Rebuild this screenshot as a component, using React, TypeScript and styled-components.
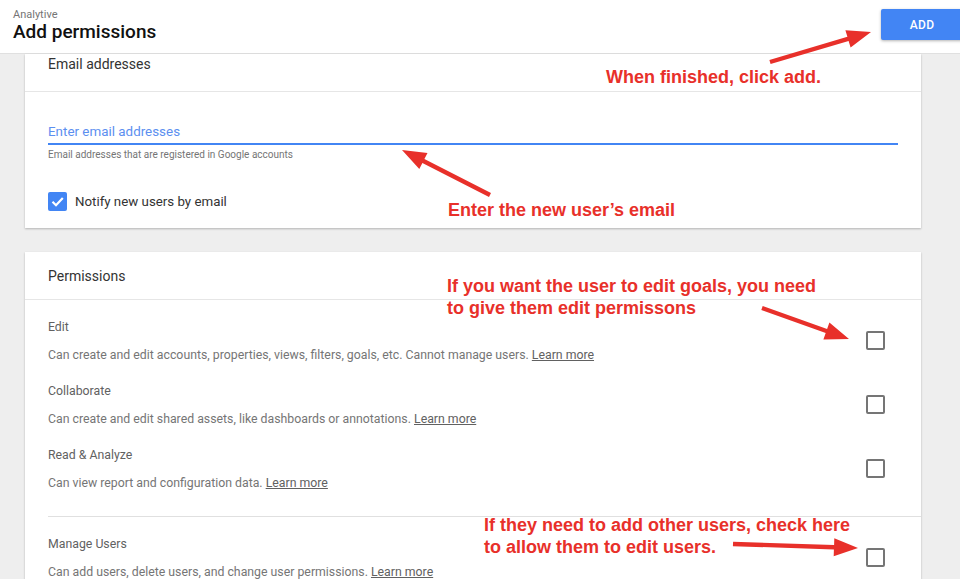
import styled, { createGlobalStyle } from 'styled-components'

const GlobalStyle = createGlobalStyle`
  html, body {
    margin: 0;
    padding: 0;
    background: #eeeeee;
    font-family: Roboto, "Liberation Sans", Arial, sans-serif;
    overflow: hidden;
  }
`

type Permission = {
  title: string
  text: string
}

const basicPermissions: Permission[] = [
  {
    title: 'Edit',
    text: 'Can create and edit accounts, properties, views, filters, goals, etc. Cannot manage users.',
  },
  {
    title: 'Collaborate',
    text: 'Can create and edit shared assets, like dashboards or annotations.',
  },
  {
    title: 'Read & Analyze',
    text: 'Can view report and configuration data.',
  },
]

const managePermission: Permission = {
  title: 'Manage Users',
  text: 'Can add users, delete users, and change user permissions.',
}

type Note = {
  x: number
  y: number
  lines: string[]
}

const notes: Note[] = [
  { x: 606, y: 66, lines: ['When finished, click add.'] },
  { x: 448, y: 199, lines: ['Enter the new user’s email'] },
  { x: 447, y: 275, lines: ['If you want the user to edit goals, you need', 'to give them edit permissons'] },
  { x: 484, y: 514, lines: ['If they need to add other users, check here', 'to allow them to edit users.'] },
]

const arrows = [
  { from: [770, 62], to: [871, 32] },
  { from: [490, 195], to: [402, 150] },
  { from: [762, 308], to: [849, 339] },
  { from: [733, 544], to: [858, 548] },
]

function arrowShape(from: number[], to: number[]) {
  const [x1, y1] = from
  const [x2, y2] = to
  const len = Math.hypot(x2 - x1, y2 - y1)
  const ux = (x2 - x1) / len
  const uy = (y2 - y1) / len
  const nx = -uy
  const ny = ux
  const head = 24
  const half = 9
  const shaft = 2.2
  const bx = x2 - ux * head
  const by = y2 - uy * head
  const pts = [
    [x1 + nx * shaft, y1 + ny * shaft],
    [bx + nx * shaft, by + ny * shaft],
    [bx + nx * half, by + ny * half],
    [x2, y2],
    [bx - nx * half, by - ny * half],
    [bx - nx * shaft, by - ny * shaft],
    [x1 - nx * shaft, y1 - ny * shaft],
  ]
  return pts.map((p) => p.map((v) => v.toFixed(1)).join(',')).join(' ')
}

function CheckMark() {
  return (
    <svg width="19" height="19" viewBox="0 0 19 19">
      <path d="M4.5 9.8 L8 13.2 L14.8 6" fill="none" stroke="#fff" strokeWidth="2.2" />
    </svg>
  )
}

function PermissionRow({ item }: { item: Permission }) {
  return (
    <Row>
      <RowText>
        <RowTitle>{item.title}</RowTitle>
        <RowDesc>
          {item.text} <LearnMore href="#">Learn more</LearnMore>
        </RowDesc>
      </RowText>
      <EmptyBox />
    </Row>
  )
}

export default function App() {
  return (
    <Page>
      <GlobalStyle />
      <Header>
        <Titles>
          <Account>Analytive</Account>
          <Title>Add permissions</Title>
        </Titles>
        <AddButton>ADD</AddButton>
      </Header>

      <Content>
        <Card>
          <CardHead $top>Email addresses</CardHead>
          <EmailBody>
            <EmailInput placeholder="Enter email addresses" />
            <Helper>Email addresses that are registered in Google accounts</Helper>
            <NotifyRow>
              <CheckedBox>
                <CheckMark />
              </CheckedBox>
              Notify new users by email
            </NotifyRow>
          </EmailBody>
        </Card>

        <Card>
          <CardHead>Permissions</CardHead>
          <Group>
            {basicPermissions.map((p) => (
              <PermissionRow key={p.title} item={p} />
            ))}
          </Group>
          <Divider />
          <Group $last>
            <PermissionRow item={managePermission} />
          </Group>
        </Card>
      </Content>

      <Overlay>
        <svg width="960" height="579">
          {arrows.map((a, i) => (
            <polygon key={i} points={arrowShape(a.from, a.to)} fill="#e8302a" />
          ))}
        </svg>
        {notes.map((n) => (
          <NoteText key={n.lines[0]} style={{ left: n.x, top: n.y }}>
            {n.lines.map((l) => (
              <div key={l}>{l}</div>
            ))}
          </NoteText>
        ))}
      </Overlay>
    </Page>
  )
}

const Page = styled.div`
  position: relative;
  width: 960px;
  height: 579px;
  overflow: hidden;
  background: #eeeeee;
`

const Header = styled.header`
  display: flex;
  justify-content: space-between;
  align-items: flex-start;
  height: 53px;
  padding-left: 13px;
  background: #fff;
  border-bottom: 1px solid #e0e0e0;
`

const Titles = styled.div`
  display: flex;
  flex-direction: column;
  padding-top: 8px;
`

const Account = styled.span`
  font-size: 11px;
  line-height: 13px;
  color: #757575;
`

const Title = styled.h1`
  margin: 0;
  font-size: 19px;
  line-height: 22px;
  font-weight: 500;
  color: #111;
`

const AddButton = styled.button`
  margin-top: 9px;
  width: 82px;
  height: 31px;
  margin-right: -3px;
  border: none;
  border-radius: 2px;
  background: #4285f4;
  color: #fff;
  font-family: Roboto, sans-serif;
  font-size: 12px;
  font-weight: 500;
  letter-spacing: 0.3px;
  box-shadow: 0 1px 3px rgba(0, 0, 0, 0.3);
  cursor: pointer;
`

const Content = styled.main`
  display: flex;
  flex-direction: column;
  gap: 24px;
  width: 896px;
  margin-left: 25px;
`

const Card = styled.section`
  background: #fff;
  box-shadow: 0 1px 2px rgba(0, 0, 0, 0.25);
`

const CardHead = styled.div<{ $top?: boolean }>`
  padding: ${(p) => (p.$top ? '2px 23px 18px' : '16px 23px 14px')};
  font-size: 14px;
  line-height: 17px;
  color: #333;
  border-bottom: 1px solid #e6e6e6;
`

const EmailBody = styled.div`
  display: flex;
  flex-direction: column;
  padding: 28px 23px 17px;
`

const EmailInput = styled.input`
  height: 23px;
  padding: 0;
  border: none;
  border-bottom: 2px solid #4285f4;
  outline: none;
  font-family: Roboto, sans-serif;
  font-size: 13.4px;
  color: #333;

  &::placeholder {
    color: #5c8ff0;
  }
`

const Helper = styled.span`
  margin-top: 4px;
  font-size: 10px;
  line-height: 12px;
  color: #757575;
`

const NotifyRow = styled.label`
  display: flex;
  align-items: center;
  gap: 8px;
  margin-top: 31px;
  font-size: 13.3px;
  color: #333;
`

const CheckedBox = styled.span`
  display: flex;
  width: 19px;
  height: 19px;
  border-radius: 2px;
  background: #4285f4;
`

const EmptyBox = styled.span`
  width: 15px;
  height: 15px;
  border: 2px solid #757575;
  border-radius: 2px;
  margin-bottom: 2px;
`

const Group = styled.div<{ $last?: boolean }>`
  display: flex;
  flex-direction: column;
  gap: 20px;
  padding: 19px 36px ${(p) => (p.$last ? '20px' : '25px')} 23px;
`

const Row = styled.div`
  display: flex;
  align-items: center;
  justify-content: space-between;
`

const RowText = styled.div`
  display: flex;
  flex-direction: column;
  gap: 12px;
`

const RowTitle = styled.span`
  font-size: 12.3px;
  line-height: 16px;
  color: #616161;
`

const RowDesc = styled.span`
  font-size: 12.3px;
  line-height: 16px;
  color: #757575;
`

const LearnMore = styled.a`
  color: #616161;
  text-decoration: underline;
`

const Divider = styled.hr`
  margin: 0 0 0 23px;
  border: none;
  border-top: 1px solid #e0e0e0;
`

const Overlay = styled.div`
  position: absolute;
  inset: 0;
  pointer-events: none;

  svg {
    position: absolute;
    inset: 0;
  }
`

const NoteText = styled.div`
  position: absolute;
  font-family: "Liberation Sans", Arial, sans-serif;
  font-weight: bold;
  font-size: 18px;
  line-height: 22px;
  color: #e8302a;
  white-space: nowrap;
`
